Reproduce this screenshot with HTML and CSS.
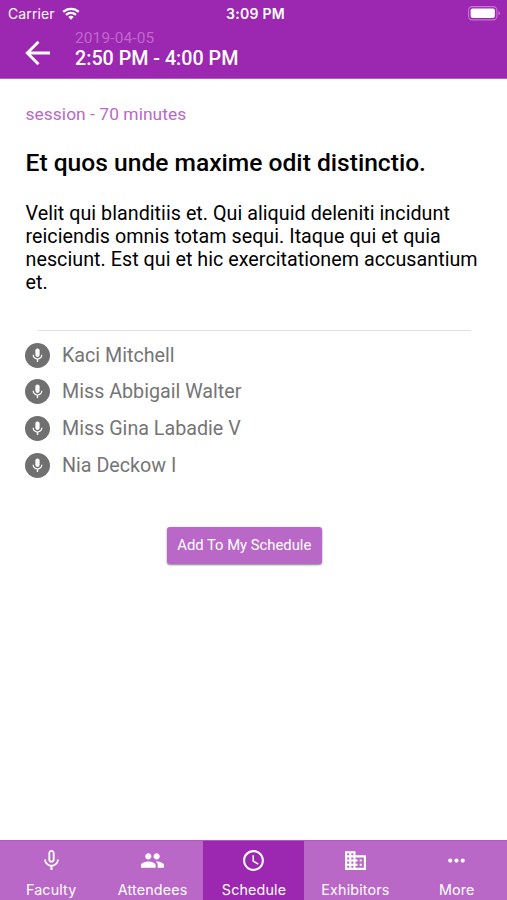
FILE: index.html
```html
<!DOCTYPE html>
<html lang="en">
<head>
<meta charset="utf-8">
<title>Session</title>
<link rel="stylesheet" href="styles.css">
</head>
<body>
<svg class="defs" width="0" height="0">
  <symbol id="mic" viewBox="0 0 24 24"><path d="M12 14c1.660 0 2.990-1.340 2.990-3L15 5c0-1.660-1.340-3-3-3S9 3.340 9 5v6c0 1.660 1.340 3 3 3zm5.300-3c0 3-2.540 5.100-5.300 5.100S6.700 14 6.700 11H5c0 3.410 2.720 6.230 6 6.720V21h2v-3.280c3.280-.48 6-3.300 6-6.720h-1.700z"/></symbol>
</svg>
<header class="header">
  <div class="status">
    <div class="carrier"><span>Carrier</span>
      <svg class="wifi" viewBox="0 0 18 13"><path d="M1.200 4.900a11.300 11.300 0 0 1 15.600 0M4 7.900a7.200 7.200 0 0 1 10 0" fill="none" stroke="#fff" stroke-width="2.200"/><path d="M6.300 10.100a4 4 0 0 1 5.400 0L9 12.800z" fill="#fff"/></svg>
    </div>
    <div class="clock">3:09 PM</div>
    <svg class="battery" viewBox="0 0 33 15"><rect x=".6" y=".6" width="28.300" height="13.300" rx="3.600" fill="none" stroke="#c675d2" stroke-width="1.100"/><rect x="2.600" y="2.600" width="24.300" height="9.300" rx="1.800" fill="#fff"/><path d="M30.500 5v4.500q1.500-.7 1.500-2.250T30.500 5z" fill="#c675d2"/></svg>
  </div>
  <div class="toolbar">
    <svg class="back" viewBox="0 0 26 26"><path d="M25 13H2.500M13.500 1.800L2.300 13l11.200 11.200" fill="none" stroke="#fff" stroke-width="2.900"/></svg>
    <div>
      <div class="date">2019-04-05</div>
      <div class="time">2:50 PM - 4:00 PM</div>
    </div>
  </div>
</header>
<main class="content">
  <div class="kind">session - 70 minutes</div>
  <h1 class="title">Et quos unde maxime odit distinctio.</h1>
  <p class="description">Velit qui blanditiis et. Qui aliquid deleniti incidunt<br>reiciendis omnis totam sequi. Itaque qui et quia<br>nesciunt. Est qui et hic exercitationem accusantium<br>et.</p>
  <ul class="speakers">
    <li><span class="avatar"><svg viewBox="0 0 24 24"><use href="#mic"/></svg></span><span>Kaci Mitchell</span></li>
    <li><span class="avatar"><svg viewBox="0 0 24 24"><use href="#mic"/></svg></span><span>Miss Abbigail Walter</span></li>
    <li><span class="avatar"><svg viewBox="0 0 24 24"><use href="#mic"/></svg></span><span>Miss Gina Labadie V</span></li>
    <li><span class="avatar"><svg viewBox="0 0 24 24"><use href="#mic"/></svg></span><span>Nia Deckow I</span></li>
  </ul>
  <button class="add">Add To My Schedule</button>
</main>
<nav class="tabs">
  <a class="tab"><svg viewBox="0 0 24 24"><path d="M12 14c1.660 0 2.990-1.340 2.990-3L15 5c0-1.660-1.340-3-3-3S9 3.340 9 5v6c0 1.660 1.340 3 3 3zm-1.200-9.100c0-.66.54-1.200 1.200-1.200s1.200.54 1.200 1.200l-.01 6.200c0 .66-.53 1.200-1.190 1.200s-1.200-.54-1.200-1.200V4.900zm6.500 6.100c0 3-2.540 5.100-5.300 5.100S6.700 14 6.700 11H5c0 3.410 2.720 6.230 6 6.720V21h2v-3.280c3.280-.48 6-3.300 6-6.720h-1.700z"/></svg><span>Faculty</span></a>
  <a class="tab"><svg viewBox="0 0 24 24"><path d="M16 11c1.660 0 2.990-1.340 2.990-3S17.660 5 16 5s-3 1.340-3 3 1.340 3 3 3zm-8 0c1.660 0 2.990-1.340 2.990-3S9.660 5 8 5 5 6.340 5 8s1.340 3 3 3zm0 2c-2.330 0-7 1.170-7 3.500V19h14v-2.500c0-2.330-4.670-3.500-7-3.500zm8 0c-.29 0-.62.02-.97.05 1.160.84 1.970 1.970 1.970 3.450V19h6v-2.500c0-2.330-4.670-3.500-7-3.500z"/></svg><span>Attendees</span></a>
  <a class="tab active"><svg viewBox="0 0 24 24"><path d="M11.990 2C6.470 2 2 6.480 2 12s4.470 10 9.990 10C17.520 22 22 17.520 22 12S17.520 2 11.990 2zM12 20c-4.420 0-8-3.580-8-8s3.580-8 8-8 8 3.580 8 8-3.580 8-8 8zm.5-13H11v6l5.250 3.150.75-1.230-4.500-2.670z"/></svg><span>Schedule</span></a>
  <a class="tab"><svg viewBox="0 0 24 24"><path d="M12 7V3H2v18h20V7H12zM6 19H4v-2h2v2zm0-4H4v-2h2v2zm0-4H4V9h2v2zm0-4H4V5h2v2zm4 12H8v-2h2v2zm0-4H8v-2h2v2zm0-4H8V9h2v2zm0-4H8V5h2v2zm10 12h-8v-2h2v-2h-2v-2h2v-2h-2V9h8v10zm-2-8h-2v2h2v-2zm0 4h-2v2h2v-2z"/></svg><span>Exhibitors</span></a>
  <a class="tab"><svg viewBox="0 0 24 24"><path d="M6 10c-1.100 0-2 .9-2 2s.9 2 2 2 2-.9 2-2-.9-2-2-2zm12 0c-1.100 0-2 .9-2 2s.9 2 2 2 2-.9 2-2-.9-2-2-2zm-6 0c-1.100 0-2 .9-2 2s.9 2 2 2 2-.9 2-2-.9-2-2-2z"/></svg><span>More</span></a>
</nav>
</body>
</html>
```

FILE: styles.css
```css
* { box-sizing: border-box; }
body {
  margin: 0;
  height: 900px;
  display: flex;
  flex-direction: column;
  overflow: hidden;
  background: #fff;
  font-family: Roboto, sans-serif;
  color: #000;
}
svg { display: block; fill: currentColor; }
.defs { position: absolute; }
.header {
  height: 79px;
  background: #9c27b0;
  border-bottom: 1px solid #b55cc4;
  color: #fff;
}
.status {
  height: 27px;
  padding: 0 6px 0 8px;
  display: grid;
  grid-template-columns: 1fr auto 1fr;
  align-items: center;
  font: 14px/27px Inter, sans-serif;
}
.carrier { display: flex; align-items: center; gap: 7px; letter-spacing: .1px; }
.wifi { width: 18px; height: 13px; }
.clock { padding-left: 2px; font-size: 14px; font-weight: 600; letter-spacing: .3px; }
.battery { width: 33px; height: 15px; justify-self: end; }
.toolbar { display: flex; padding-left: 25px; gap: 24px; }
.back { width: 26px; height: 26px; margin-top: 13px; }
.date { padding-top: 1px; font-size: 15.500px; line-height: 20px; letter-spacing: .1px; color: #c067cc; }
.time { font-size: 19.700px; line-height: 22px; font-weight: 500; }
.content { flex: 1; padding: 24px 25px 0 25.500px; display: flex; flex-direction: column; }
.kind { font-size: 17.400px; line-height: 22px; letter-spacing: .05px; color: #ba68c8; }
.title { margin: 22px 0 0; font-size: 24.600px; line-height: 32px; font-weight: 500; }
.description { margin: 23px 0 0; font-size: 19.700px; line-height: 23px; letter-spacing: .04px; white-space: nowrap; }
.speakers {
  list-style: none;
  margin: 36px 0 0;
  padding: 7px 0 0;
  background: linear-gradient(#e0e0e0, #e0e0e0) 12px 0 / 433px 1px no-repeat;
}
.speakers li { display: flex; align-items: center; gap: 12px; height: 36.600px; font-size: 19.700px; color: #757575; }
.avatar { width: 25px; height: 25px; margin-left: -.5px; border-radius: 50%; background: #707070; color: #fff; display: grid; place-items: center; }
.avatar svg { width: 17px; height: 17px; }
.add {
  align-self: center;
  width: 155px;
  height: 37px;
  margin: 43.500px 0 0 -19px;
  padding: 0;
  border: 0;
  border-radius: 3px;
  background: #ba68c8;
  color: #fff;
  font: 14.800px Roboto, sans-serif;
  box-shadow: 0 1px 2px rgba(0, 0, 0, .5);
}
.tabs { display: grid; grid-template-columns: repeat(5, 1fr); height: 60px; background: #ba68c8; border-top: 1px solid #b05abf; color: #fff; }
.tab { display: flex; flex-direction: column; align-items: center; padding: 7px 0 0 1px; font: 14.300px/18px Inter, sans-serif; letter-spacing: .15px; }
.tab svg { width: 25px; height: 25px; margin-bottom: 8px; }
.active { background: #9c27b0; }
```
